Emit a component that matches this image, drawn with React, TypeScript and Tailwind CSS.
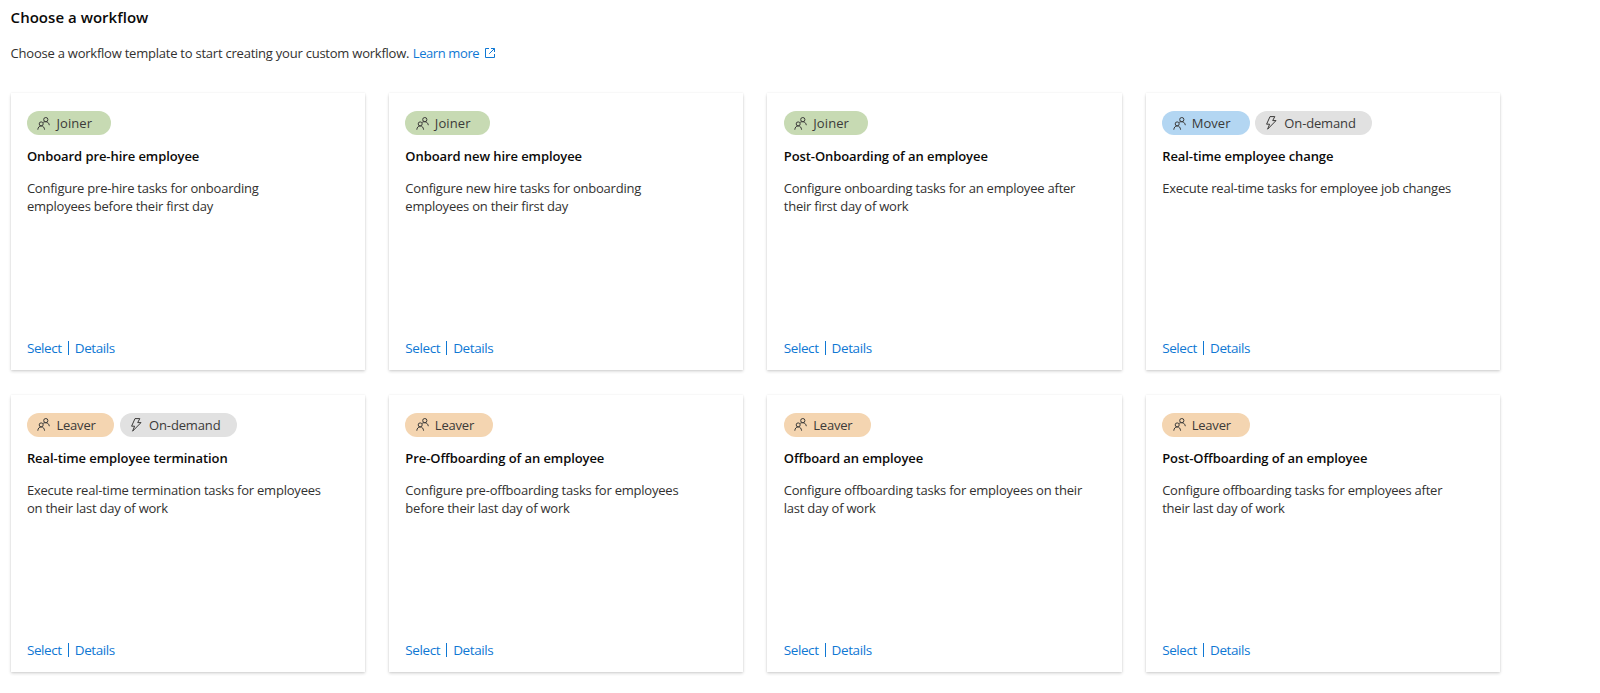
import React from "react";

type Tag = "Joiner" | "Mover" | "Leaver" | "On-demand";

interface Workflow {
  tags: Tag[];
  title: string;
  lines: string[];
}

const workflows: Workflow[] = [
  { tags: ["Joiner"], title: "Onboard pre-hire employee", lines: ["Configure pre-hire tasks for onboarding", "employees before their first day"] },
  { tags: ["Joiner"], title: "Onboard new hire employee", lines: ["Configure new hire tasks for onboarding", "employees on their first day"] },
  { tags: ["Joiner"], title: "Post-Onboarding of an employee", lines: ["Configure onboarding tasks for an employee after", "their first day of work"] },
  { tags: ["Mover", "On-demand"], title: "Real-time employee change", lines: ["Execute real-time tasks for employee job changes"] },
  { tags: ["Leaver", "On-demand"], title: "Real-time employee termination", lines: ["Execute real-time termination tasks for employees", "on their last day of work"] },
  { tags: ["Leaver"], title: "Pre-Offboarding of an employee", lines: ["Configure pre-offboarding tasks for employees", "before their last day of work"] },
  { tags: ["Leaver"], title: "Offboard an employee", lines: ["Configure offboarding tasks for employees on their", "last day of work"] },
  { tags: ["Leaver"], title: "Post-Offboarding of an employee", lines: ["Configure offboarding tasks for employees after", "their last day of work"] },
];

const tagStyles: Record<Tag, string> = {
  Joiner: "w-[84.5px] bg-[#c7dab3] tracking-[0.1px]",
  Mover: "w-[87.5px] bg-[#b3d6f2] tracking-[0.05px]",
  Leaver: "w-[87.5px] bg-[#f4d5b1] tracking-[-0.2px]",
  "On-demand": "w-[117px] bg-[#e1e1e1] tracking-[-0.15px]",
};

function PeopleIcon() {
  return (
    <svg className="h-[13px] w-[13px] shrink-0" viewBox="0 0 13 13" fill="none" stroke="#3b3a39" strokeWidth="1">
      <circle cx="8.8" cy="2.6" r="2.1" />
      <path d="M6 5.6C6.8 4.8 7.8 4.7 8.8 4.7C10.8 4.8 12.1 6.2 12.3 8.2" />
      <circle cx="4.2" cy="6.9" r="2" />
      <path d="M0.8 12.7C1 10.3 2.3 8.9 4.2 8.9C6.1 8.9 7.3 10.3 7.6 12.7" />
    </svg>
  );
}

function BoltIcon() {
  return (
    <svg className="h-[14px] w-[13px] shrink-0" viewBox="0 0 13 14" fill="none" stroke="#3b3a39" strokeWidth="1" strokeLinejoin="round">
      <path d="M5 0.6H9.8L7.7 4.6H11L2.6 13.2L4.6 8.2H1.6Z" />
    </svg>
  );
}

function ExternalIcon() {
  return (
    <svg className="h-[10px] w-[10px]" viewBox="0 0 10 10" fill="none" stroke="#0f78d4" strokeWidth="1">
      <path d="M4 0.5H0.5V9.5H9.5V6M6 0.5H9.5V4M9.5 0.5L4.2 5.8" />
    </svg>
  );
}

function Pill({ tag }: { tag: Tag }) {
  return (
    <span className={`flex h-6 items-center gap-[6px] rounded-full pl-[10.5px] text-[13px] text-[#3b3a39] ${tagStyles[tag]}`}>
      {tag === "On-demand" ? <BoltIcon /> : <PeopleIcon />}
      <span className="pt-[2px]">{tag}</span>
    </span>
  );
}

function Card({ flow }: { flow: Workflow }) {
  return (
    <article className="flex h-[277px] flex-col bg-white pr-4 pl-[16.3px] pt-[18px] pb-[13px] shadow-[0_1.5px_3px_rgba(0,0,0,0.16),0_0_2px_rgba(0,0,0,0.09)]">
      <div className="flex gap-[5.2px]">
        {flow.tags.map((tag) => (
          <Pill key={tag} tag={tag} />
        ))}
      </div>
      <h2 className="mt-3 text-[13px] leading-[18px] font-[650] tracking-[-0.08px] whitespace-nowrap text-[#0b0a09]">{flow.title}</h2>
      <p className="mt-[14px] text-[13px] leading-[18px] tracking-[-0.22px] whitespace-nowrap text-[#323130]">
        {flow.lines.map((line) => (
          <span key={line} className="block">{line}</span>
        ))}
      </p>
      <div className="mt-auto flex items-center gap-[6px] text-[13.5px] leading-[18px] tracking-[-0.4px] text-[#0f78d4]">
        <a>Select</a>
        <span className="h-[14px] w-px bg-[#0f78d4]" />
        <a>Details</a>
      </div>
    </article>
  );
}

export default function App() {
  return (
    <main className="h-[693px] w-[1600px] bg-white pl-[10.6px] font-['Open_Sans','Noto_Sans',sans-serif]">
      <h1 className="pt-[7px] text-[15px] leading-5 font-[650] tracking-[0.03px] text-[#0b0a09]">Choose a workflow</h1>
      <p className="mt-[17px] flex items-center text-[13px] leading-[18px] tracking-[-0.23px] text-[#323130]">
        <span>Choose a workflow template to start creating your custom workflow.</span>
        <a className="ml-[3.5px] flex items-center gap-[6px] tracking-[-0.4px] text-[#0f78d4]">
          Learn more <ExternalIcon />
        </a>
      </p>
      <section className="mt-[31px] grid w-[1489.4px] grid-cols-4 gap-x-[24.3px] gap-y-[24.5px]">
        {workflows.map((flow) => (
          <Card key={flow.title} flow={flow} />
        ))}
      </section>
    </main>
  );
}
